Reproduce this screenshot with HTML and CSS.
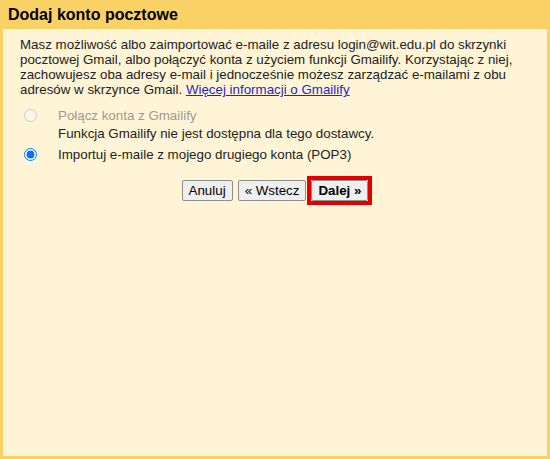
FILE: index.html
```html
<!DOCTYPE html>
<html lang="pl">
<head>
<meta charset="utf-8">
<title>Dodaj konto pocztowe</title>
<link rel="stylesheet" href="styles.css">
</head>
<body>
<div class="frame">
  <h1 class="title">Dodaj konto pocztowe</h1>
  <div class="panel">
    <p class="intro">Masz możliwość albo zaimportować e-maile z adresu login@wit.edu.pl do skrzynki pocztowej Gmail, albo połączyć konta z użyciem funkcji Gmailify. Korzystając z niej, zachowujesz oba adresy e-mail i jednocześnie możesz zarządzać e-mailami z obu adresów w skrzynce Gmail. <a class="link" href="#">Więcej informacji o Gmailify</a></p>
    <div class="options">
      <label class="opt opt-disabled">
        <input type="radio" name="mode" disabled class="radio">
        <span>Połącz konta z Gmailify</span>
      </label>
      <div class="note">Funkcja Gmailify nie jest dostępna dla tego dostawcy.</div>
      <label class="opt opt-last">
        <input type="radio" name="mode" checked class="radio">
        <span>Importuj e-maile z mojego drugiego konta (POP3)</span>
      </label>
    </div>
    <div class="actions">
      <button class="btn">Anuluj</button>
      <button class="btn btn-back">« Wstecz</button>
      <span class="highlight"><button class="btn btn-next">Dalej »</button></span>
    </div>
  </div>
</div>
</body>
</html>
```
FILE: styles.css
```css
html, body {
  margin: 0;
  padding: 0;
}
body {
  font-family: "Liberation Sans", Arial, sans-serif;
  font-size: 13.33px;
  color: #222;
  background: #fad165;
}
.frame {
  box-sizing: border-box;
  height: 459px;
  display: flex;
  flex-direction: column;
  padding: 0 3px 3px 3px;
  background: #fad165;
}
.title {
  margin: 0;
  height: 29px;
  box-sizing: border-box;
  padding: 6px 0 0 5px;
  font-size: 16px;
  line-height: 18px;
  font-weight: bold;
  color: #000;
}
.panel {
  flex: 1;
  background: #fff5d6;
  padding: 8px 17px 0 17px;
}
.intro {
  margin: 0;
  line-height: 15px;
}
.link {
  color: #2a1fcc;
  text-decoration: underline;
}
.options {
  margin-top: 11px;
}
.opt {
  display: flex;
  align-items: center;
  line-height: 15px;
}
.radio {
  margin: 0 21px 0 4px;
  width: 13px;
  height: 13px;
  flex: none;
}
.opt-disabled {
  color: #9a9a9a;
}
.note {
  margin: 3px 0 0 38px;
  line-height: 15px;
}
.opt-last {
  margin-top: 6px;
}
.actions {
  display: flex;
  justify-content: center;
  align-items: flex-start;
  margin-top: 18px;
}
.btn {
  font-family: "Liberation Sans", Arial, sans-serif;
  font-size: 13.33px;
  color: #000;
  height: 21px;
  padding: 0 6px;
  background: #efefef;
  border: 1px solid #8f8f8f;
  border-radius: 2px;
  line-height: 19px;
  display: block;
}
.btn-back {
  margin-left: 5px;
}
.highlight {
  display: block;
  border: 4px solid #e00000;
  margin: -4px -4px 0 1px;
}
.btn-next {
  font-weight: bold;
}
```
